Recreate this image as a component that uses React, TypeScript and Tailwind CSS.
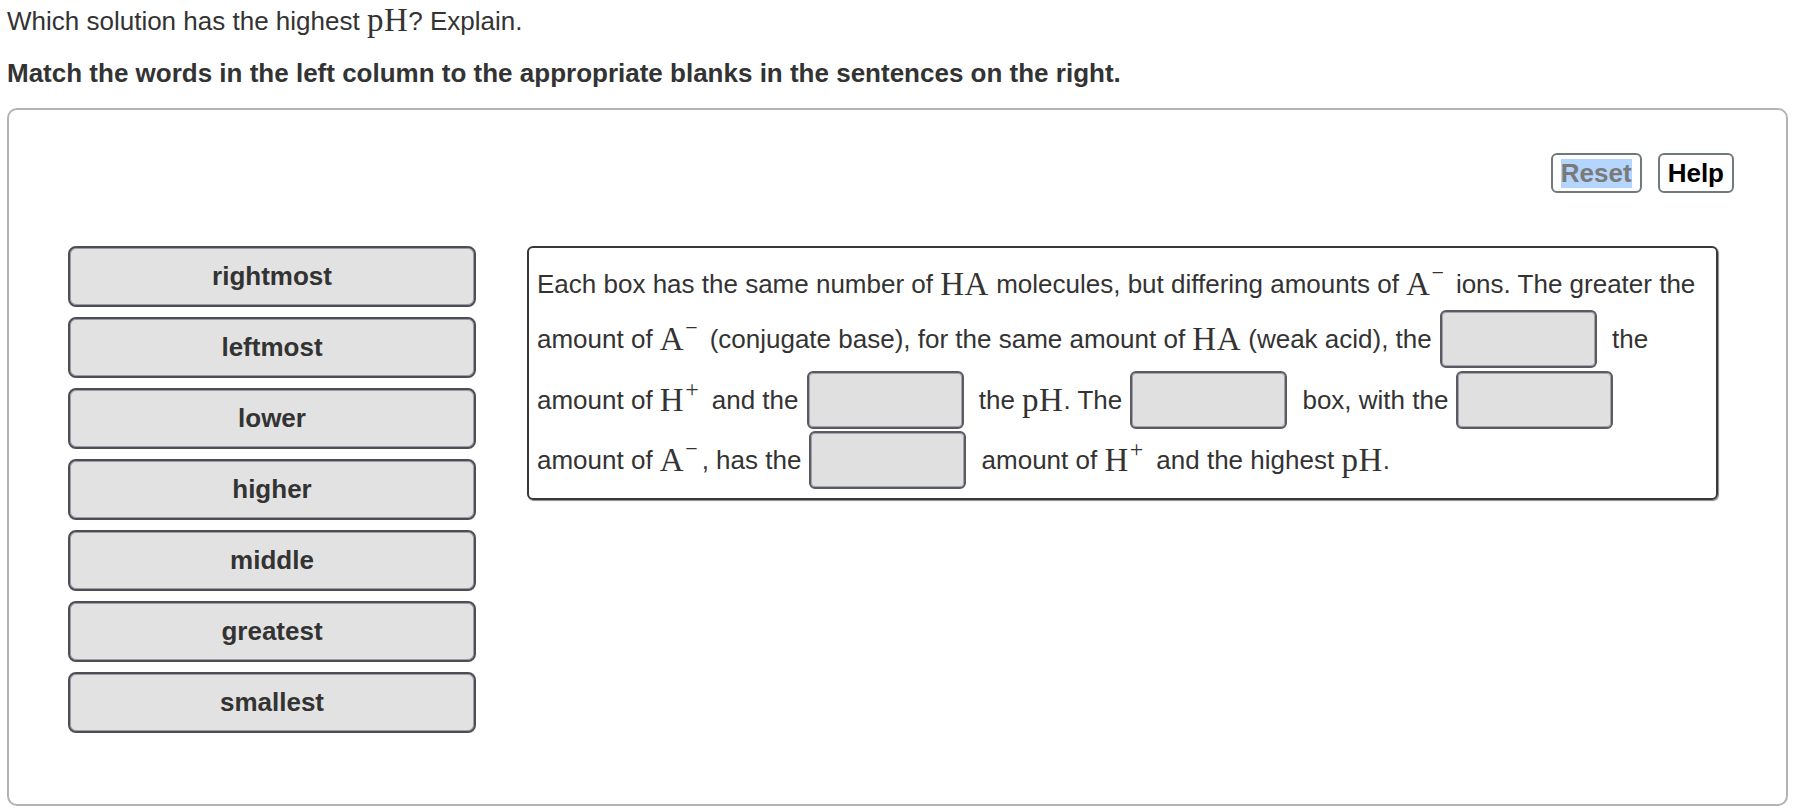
import React from "react";

const M = ({ children }: { children: React.ReactNode }) => (
  <span className="font-['Liberation_Serif',serif] text-[33px] leading-none tracking-[0.5px]">{children}</span>
);

const Minus = ({ cls = "mr-[12px]" }: { cls?: string }) => (
  <span className={"relative -top-[11px] ml-[1px] font-['Liberation_Serif',serif] text-[22px] leading-none " + cls}>−</span>
);

const Plus = () => (
  <span className="relative -top-[11px] ml-[1px] mr-[13px] font-['Liberation_Serif',serif] text-[24px] leading-none">+</span>
);

const T = ({ children }: { children: React.ReactNode }) => <span className="whitespace-pre">{children}</span>;

const Blank = () => (
  <span className="mx-[8px] inline-block h-[58px] w-[157px] shrink-0 rounded-[6px] border-2 border-[#5a5a64] bg-[#e0e0e0] shadow-[inset_0_0_0_1px_#a4a4ac]" />
);

const cards = ["rightmost", "leftmost", "lower", "higher", "middle", "greatest", "smallest"];

export default function App() {
  return (
    <div className="h-[810px] w-[1816px] overflow-hidden bg-white font-['Liberation_Sans',Arial,sans-serif] text-[#333]">
      <div className="flex h-[37px] items-end pl-[7px] text-[26px] leading-[32px]">
        <span className="whitespace-pre">Which solution has the highest </span>
        <M>pH</M>
        <span className="whitespace-pre">? Explain.</span>
      </div>
      <div className="mt-[20px] h-[32px] pl-[7px] text-[26px] font-bold leading-[32px]">
        Match the words in the left column to the appropriate blanks in the sentences on the right.
      </div>
      <div className="ml-[7px] mt-[19px] h-[698px] w-[1781px] rounded-[10px] border-2 border-[#b3b3b3]">
        <div className="flex justify-end gap-[16px] pr-[52px] pt-[43px]">
          <button className="flex h-[40px] items-center rounded-[6px] border-2 border-[#707a7d] bg-white px-[8px] text-[26px] font-bold text-[#7a7a7a]">
            <span className="bg-[#b4d5fe] leading-[29px]">Reset</span>
          </button>
          <button className="flex h-[40px] items-center rounded-[6px] border-2 border-[#707a7d] bg-white px-[8px] text-[26px] font-bold text-black">
            Help
          </button>
        </div>
        <div className="mt-[53px] flex gap-[51px] pl-[59px]">
          <div className="flex w-[408px] flex-col gap-[10px]">
            {cards.map((c) => (
              <div
                key={c}
                className="flex h-[61px] items-center justify-center rounded-[8px] border-2 border-[#4d4d57] bg-[#e2e2e2] text-[26px] font-bold text-[#333] shadow-[inset_0_0_0_1px_#9c9ca4]"
              >
                {c}
              </div>
            ))}
          </div>
          <div className="h-[254px] w-[1191px] rounded-[6px] border-2 border-[#383838] px-[8px] pt-[10px] text-[26px] shadow-[1px_1px_1px_#8a8a8a]">
            <div className="flex h-[52px] items-center">
              <T>Each box has the same number of </T>
              <M>HA</M>
              <T> molecules, but differing amounts of </T>
              <M>A</M>
              <Minus />
              <T>ions. The greater the</T>
            </div>
            <div className="flex h-[58px] items-center">
              <T>amount of </T>
              <M>A</M>
              <Minus />
              <T>(conjugate base), for the same amount of </T>
              <M>HA</M>
              <T> (weak acid), the</T>
              <Blank />
              <T> the</T>
            </div>
            <div className="mt-[3px] flex h-[58px] items-center">
              <T>amount of </T>
              <M>H</M>
              <Plus />
              <T>and the</T>
              <Blank />
              <T> the </T>
              <M>pH</M>
              <T>. The</T>
              <Blank />
              <T> box, with the</T>
              <Blank />
            </div>
            <div className="mt-[2px] flex h-[58px] items-center">
              <T>amount of </T>
              <M>A</M>
              <Minus cls="mr-[4px]" />
              <T>, has the</T>
              <Blank />
              <T> amount of </T>
              <M>H</M>
              <Plus />
              <T>and the highest </T>
              <M>pH</M>
              <T>.</T>
            </div>
          </div>
        </div>
      </div>
    </div>
  );
}
